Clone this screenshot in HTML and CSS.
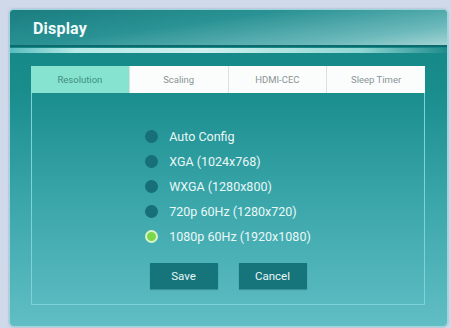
FILE: index.html
```html
<!DOCTYPE html>
<html lang="en">
  <head>
    <meta charset="UTF-8" />
    <title>Display</title>
    <link rel="stylesheet" href="styles.css">
  </head>
  <body>
    <div class="dialog">
      <div class="header">
        <h1>Display</h1>
      </div>
      <div class="shine"></div>

      <div class="content">
        <div class="tabs">
          <div class="tab active">Resolution</div>
          <div class="tab">Scaling</div>
          <div class="tab">HDMI-CEC</div>
          <div class="tab">Sleep Timer</div>
        </div>

        <div class="panel">
          <div class="options">
            <div class="option"><span class="radio"></span>Auto Config</div>
            <div class="option"><span class="radio"></span>XGA (1024x768)</div>
            <div class="option"><span class="radio"></span>WXGA (1280x800)</div>
            <div class="option"><span class="radio"></span>720p 60Hz (1280x720)</div>
            <div class="option checked"><span class="radio"></span>1080p 60Hz (1920x1080)</div>
          </div>

          <div class="btn_contain">
            <button class="save">Save</button>
            <button class="cancel">Cancel</button>
          </div>
        </div>
      </div>
    </div>
  </body>
</html>
```

FILE: styles.css
```css
* {
  padding: 0;
  margin: 0;
  box-sizing: border-box;
}

body {
  width: 451px;
  height: 328px;
  overflow: hidden;
  background-color: #cfd9e9;
  padding: 9px 3px 0 9px;
  font-family: Roboto, "Liberation Sans", sans-serif;
}

.dialog {
  width: 439px;
  height: 318px;
  border-radius: 5px;
  overflow: hidden;
  border: 1px solid #9fd6de;
  background: linear-gradient(180deg, #128584 0%, #198c8c 25%, #3aa6aa 60%, #60bec4 100%);
  box-shadow: 0 0 2px rgba(80, 110, 140, 0.5);
}

.header {
  height: 37px;
  padding: 9px 0 0 23px;
  background: linear-gradient(172deg, #1b7e81 0%, #2a9294 40%, #6cb9bb 80%, #a3d4d4 100%);
  border-bottom: 2px solid #0d6a6d;
}
.header h1 {
  color: #f2fbfb;
  font-size: 16px;
  font-weight: bold;
  letter-spacing: 0.2px;
}

.shine {
  height: 5px;
  margin-top: 1px;
  background: linear-gradient(90deg, #5fc3c3 0%, #c8f4f2 15%, #e4fbf9 45%, #9fe0dc 80%, #1e8c8c 100%);
  opacity: 0.9;
}

.content {
  padding: 13px 22px 0 21px;
}

.tabs {
  display: flex;
  height: 27px;
  background-color: #fbfdfd;
}
.tab {
  flex: 1;
  display: flex;
  justify-content: center;
  align-items: center;
  font-size: 9.5px;
  color: #8a9494;
  border-left: 1px solid #d9e1e1;
}
.tab:first-child {
  border-left: none;
}
.tab.active {
  background-color: #86e3cf;
  color: #3f8f80;
}

.panel {
  height: 212px;
  border: 1px solid #7fd3d8;
  border-top: none;
  padding-top: 31px;
  display: flex;
  flex-direction: column;
  align-items: center;
}

.options {
  display: flex;
  flex-direction: column;
}
.option {
  height: 25px;
  display: flex;
  align-items: center;
  color: #eaf8f7;
  font-size: 12.5px;
}
.radio {
  width: 13px;
  height: 13px;
  border-radius: 50%;
  background-color: #176f77;
  margin-right: 11px;
}
.checked .radio {
  background-color: #7cd84a;
  border: 2px solid #d7f4c8;
}

.btn_contain {
  margin-top: 14px;
  display: flex;
  gap: 21px;
}
.btn_contain button {
  width: 68px;
  height: 26px;
  border: none;
  outline: none;
  background-color: #16747b;
  color: #e8f7f7;
  font-family: Roboto, "Liberation Sans", sans-serif;
  font-size: 11.5px;
  box-shadow: 0 1px 1px rgba(0, 60, 60, 0.3);
}
```
